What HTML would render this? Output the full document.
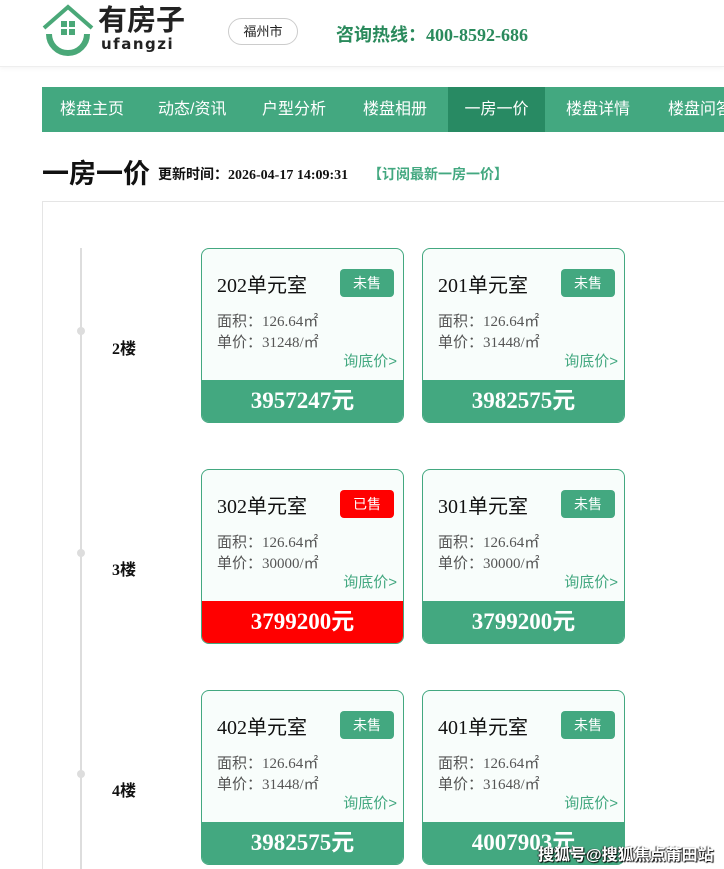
<!DOCTYPE html>
<html><head><meta charset="utf-8"><style>
*{margin:0;padding:0;box-sizing:border-box}
html,body{width:724px;height:869px;overflow:hidden}
body{background:#fff;font-family:"Liberation Sans","Noto Sans CJK SC",sans-serif;position:relative}
.hdr{position:absolute;left:0;top:0;width:724px;height:67px;border-bottom:1px solid #eee;box-shadow:0 2px 4px rgba(0,0,0,.04)}
.logo{position:absolute;left:41px;top:4px}
.lt{position:absolute;left:98px;top:0px;font-size:29px;font-weight:bold;color:#222;font-family:"Noto Sans CJK SC",sans-serif;line-height:36px}
.ls{position:absolute;left:101px;top:35px;font-size:15px;line-height:18px;font-weight:bold;color:#222;letter-spacing:1.5px;font-family:"DejaVu Sans",sans-serif}
.city{position:absolute;left:228px;top:18px;width:70px;height:27px;border:1px solid #ccc;border-radius:14px;font-size:13px;text-align:center;line-height:25px;color:#222}
.tel{position:absolute;left:336px;top:21px;font-size:18px;font-weight:bold;color:#2a8a5c;font-family:"Liberation Serif","Noto Sans CJK SC",serif}
.nav{position:absolute;left:42px;top:87px;width:682px;height:45px;background:#43a880}
.nav span{position:absolute;top:0;line-height:45px;color:#fff;font-size:16px;white-space:nowrap}
.nav .act{background:#288a63;width:97px;text-align:center}
.ttl{position:absolute;left:42px;top:152px;font-size:27px;font-weight:bold;color:#111;font-family:"Noto Sans CJK SC",sans-serif}
.upd{position:absolute;left:158px;top:164px;font-size:14px;font-weight:bold;color:#111;font-family:"Liberation Serif","Noto Sans CJK SC",serif}
.sub{position:absolute;left:368px;top:164px;font-size:14px;font-weight:bold;color:#43a880;font-family:"Noto Sans CJK SC",sans-serif}
.box{position:absolute;left:42px;top:201px;width:700px;height:668px;border:1px solid #e5e5e5;border-bottom:none}
.line{position:absolute;left:80px;top:248px;width:2px;height:621px;background:#ddd}
.dot{position:absolute;left:77px;width:8px;height:8px;border-radius:50%;background:#ddd}
.fl{position:absolute;left:112px;font-size:16px;font-weight:bold;color:#111;font-family:"Liberation Serif","Noto Sans CJK SC",serif}
.card{position:absolute;width:203px;height:175px;border:1px solid #43a880;border-radius:8px;background:#f8fdfb;overflow:hidden}
.card .n{position:absolute;left:15px;top:20px;font-size:20px;color:#111;font-family:"Liberation Serif","Noto Sans CJK SC",serif}
.card .b{position:absolute;left:138px;top:20px;width:54px;height:28px;border-radius:4px;background:#43a880;color:#fff;font-size:14px;text-align:center;line-height:28px}
.card .i{position:absolute;left:15px;font-size:15px;color:#555;font-family:"Liberation Serif","Noto Sans CJK SC",serif}
.card .q{position:absolute;right:6px;top:101px;font-size:15px;color:#43a880}
.card .p{position:absolute;left:0;bottom:0;width:100%;height:42px;background:#43a880;color:#fff;text-align:center;line-height:42px;font-size:23px;font-weight:bold;font-family:"Liberation Serif","Noto Sans CJK SC",serif}
.red .b,.red .p{background:#f00}
.wm{position:absolute;left:538px;top:841px;font-size:16px;font-weight:bold;color:#fff;text-shadow:1px 1px 1px #000,-1px 0 1px #333}
</style></head><body>
<div class="hdr">
<svg class="logo" width="54" height="52" viewBox="0 0 54 52"><path d="M3 24 L27 3 L51 24" fill="none" stroke="#4aa878" stroke-width="4"/><path d="M8 30 A19 19 0 0 0 46 30" fill="none" stroke="#4aa878" stroke-width="6"/><rect x="20" y="17" width="6" height="6" fill="#4aa878"/><rect x="28" y="17" width="6" height="6" fill="#4aa878"/><rect x="20" y="25" width="6" height="6" fill="#4aa878"/><rect x="28" y="25" width="6" height="6" fill="#4aa878"/></svg>
<div class="lt">有房子</div><div class="ls">ufangzi</div>
<div class="city">福州市</div>
<div class="tel">咨询热线：400-8592-686</div>
</div>
<div class="nav">
<span style="left:18px">楼盘主页</span><span style="left:116px">动态/资讯</span><span style="left:220px">户型分析</span><span style="left:321px">楼盘相册</span><span class="act" style="left:406px">一房一价</span><span style="left:524px">楼盘详情</span><span style="left:626px">楼盘问答</span>
</div>
<div class="ttl">一房一价</div>
<div class="upd">更新时间：2026-04-17 14:09:31</div>
<div class="sub">【订阅最新一房一价】</div>
<div class="box"></div>
<div class="line"></div>
<div class="dot" style="top:327px"></div><div class="dot" style="top:549px"></div><div class="dot" style="top:770px"></div>
<div class="fl" style="top:335px">2楼</div><div class="fl" style="top:556px">3楼</div><div class="fl" style="top:777px">4楼</div>

<div class="card" style="left:201px;top:248px"><div class="n">202单元室</div><div class="b">未售</div><div class="i" style="top:61px">面积：126.64㎡</div><div class="i" style="top:82px">单价：31248/㎡</div><div class="q">询底价&gt;</div><div class="p">3957247元</div></div>
<div class="card" style="left:422px;top:248px"><div class="n">201单元室</div><div class="b">未售</div><div class="i" style="top:61px">面积：126.64㎡</div><div class="i" style="top:82px">单价：31448/㎡</div><div class="q">询底价&gt;</div><div class="p">3982575元</div></div>
<div class="card red" style="left:201px;top:469px"><div class="n">302单元室</div><div class="b">已售</div><div class="i" style="top:61px">面积：126.64㎡</div><div class="i" style="top:82px">单价：30000/㎡</div><div class="q">询底价&gt;</div><div class="p">3799200元</div></div>
<div class="card" style="left:422px;top:469px"><div class="n">301单元室</div><div class="b">未售</div><div class="i" style="top:61px">面积：126.64㎡</div><div class="i" style="top:82px">单价：30000/㎡</div><div class="q">询底价&gt;</div><div class="p">3799200元</div></div>
<div class="card" style="left:201px;top:690px"><div class="n">402单元室</div><div class="b">未售</div><div class="i" style="top:61px">面积：126.64㎡</div><div class="i" style="top:82px">单价：31448/㎡</div><div class="q">询底价&gt;</div><div class="p">3982575元</div></div>
<div class="card" style="left:422px;top:690px"><div class="n">401单元室</div><div class="b">未售</div><div class="i" style="top:61px">面积：126.64㎡</div><div class="i" style="top:82px">单价：31648/㎡</div><div class="q">询底价&gt;</div><div class="p">4007903元</div></div>
<div class="wm">搜狐号@搜狐焦点莆田站</div>
</body></html>
